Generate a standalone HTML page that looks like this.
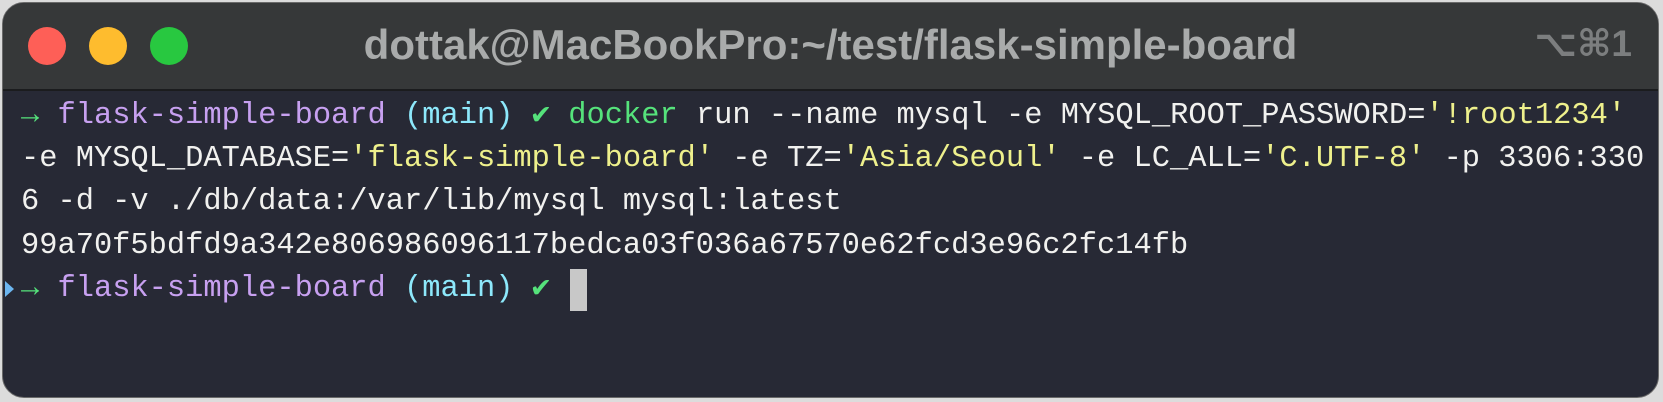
<!DOCTYPE html>
<html><head><meta charset="utf-8"><style>
html,body{margin:0;padding:0;width:1663px;height:402px;background:#dcdcdc;overflow:hidden}
.win{position:absolute;left:2px;top:2px;width:1657px;height:396px;border-radius:22px;background:#272935;overflow:hidden;border:1px solid #6a6a6a;box-sizing:border-box}
.title{position:absolute;left:0;top:0;right:0;height:86px;background:#363839;border-bottom:2px solid #1b1c1e}
.dot{position:absolute;top:24px;width:38px;height:38px;border-radius:50%}
.t{position:absolute;left:0;right:0;top:18px;text-align:center;font:bold 42px "Liberation Sans",sans-serif;color:#a9abab}
.sc{position:absolute;right:26px;top:19px;font:bold 37px "Liberation Sans","DejaVu Sans",sans-serif;color:#7c7e7f}
.term{position:absolute;left:18px;top:92px;font:30.4px/43.2px "Liberation Mono",monospace;color:#f1f1ef;white-space:pre}
.p{color:#c7a0f0}.c{color:#8de8fb}.g{color:#55e27b}.y{color:#eef08c}
.cur{position:absolute;left:567px;top:266px;width:17px;height:42px;background:#c8c8c8}
</style></head><body>
<div class="win">
<div class="title">
<div class="dot" style="left:25px;background:#fe5f57"></div>
<div class="dot" style="left:86px;background:#febc2e"></div>
<div class="dot" style="left:147px;background:#28c840"></div>
<div class="t">dottak@MacBookPro:~/test/flask-simple-board</div>
<div class="sc">⌥⌘1</div>
</div>
<div class="term"><span class="g">→</span> <span class="p">flask-simple-board</span> <span class="c">(main)</span> <span class="g">✔</span> <span class="g">docker</span> run --name mysql -e MYSQL_ROOT_PASSWORD=<span class="y">'!root1234'</span>
-e MYSQL_DATABASE=<span class="y">'flask-simple-board'</span> -e TZ=<span class="y">'Asia/Seoul'</span> -e LC_ALL=<span class="y">'C.UTF-8'</span> -p 3306:330
6 -d -v ./db/data:/var/lib/mysql mysql:latest
99a70f5bdfd9a342e806986096117bedca03f036a67570e62fcd3e96c2fc14fb
<span class="g">→</span> <span class="p">flask-simple-board</span> <span class="c">(main)</span> <span class="g">✔</span></div>
<div class="cur"></div>
<div style="position:absolute;left:2px;top:278px;width:0;height:0;border-top:8px solid transparent;border-bottom:8px solid transparent;border-left:9px solid #6cb6f0"></div>
</div>
</body></html>
